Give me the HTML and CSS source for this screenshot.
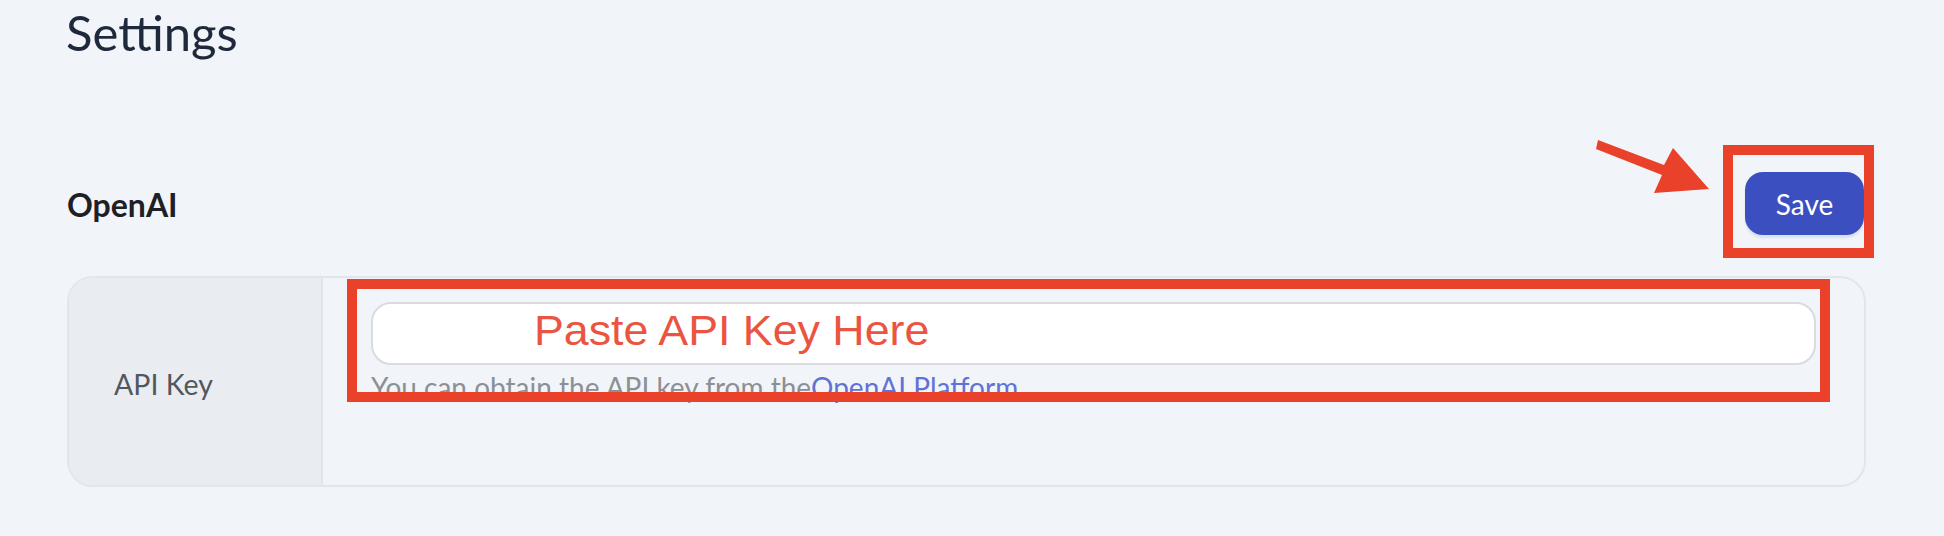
FILE: index.html
```html
<!DOCTYPE html>
<html lang="en">
<head>
<meta charset="utf-8">
<title>Settings</title>
<link rel="stylesheet" href="styles.css">
</head>
<body>
<div class="page">
  <h1 class="title">Settings</h1>
  <div class="section-head">
    <h2 class="section-title">OpenAI</h2>
    <button class="btn-save" type="button">Save</button>
  </div>
  <div class="card">
    <div class="card-label">API Key</div>
    <div class="card-body">
      <div class="key-input"><span class="annot-text">Paste API Key Here</span></div>
      <p class="hint">You can obtain the API key from the<a class="hint-link" href="#">OpenAI Platform</a></p>
    </div>
  </div>
</div>
<svg class="annotations" width="1944" height="536" viewBox="0 0 1944 536" aria-hidden="true">
  <rect x="1728" y="150" width="141" height="103" fill="none" stroke="#e9412a" stroke-width="10"/>
  <rect x="352" y="284" width="1473" height="113" fill="none" stroke="#e9412a" stroke-width="10"/>
  <polygon points="1598,140 1664,165 1673,148 1709,189 1654,193 1662,175 1596,149" fill="#e9412a"/>
</svg>
</body>
</html>
```
FILE: styles.css
```css
html, body {
  margin: 0;
  padding: 0;
}
body {
  background: #f1f5f9;
  font-family: "Lato", "Noto Sans", sans-serif;
  position: relative;
  width: 1944px;
  height: 536px;
  overflow: hidden;
}
.page {
  padding: 0 78px 0 66px;
}
.title {
  margin: 2px 0 0 0;
  font-size: 49px;
  line-height: 61px;
  font-weight: 400;
  color: #1e293b;
}
.section-head {
  margin-top: 109px;
  height: 63px;
  display: flex;
  align-items: center;
  justify-content: space-between;
}
.section-title {
  margin: 0 0 0 1px;
  font-size: 32px;
  font-weight: 700;
  color: #1f2023;
  line-height: 40px;
  padding-top: 2px;
}
.btn-save {
  height: 63px;
  width: 119px;
  margin-right: 2px;
  border: none;
  border-radius: 18px;
  background: #3c4fc1;
  color: #ffffff;
  font-family: "Lato", "Noto Sans", sans-serif;
  font-size: 28px;
  padding: 0;
  box-shadow: 0 3px 2px rgba(80, 110, 200, 0.15);
}
.card {
  margin: 41px 0 0 1px;
  border: 2px solid #e2e6ea;
  border-radius: 26px;
  display: flex;
  overflow: hidden;
}
.card-label {
  width: 254px;
  flex: none;
  background: #e9edf2;
  border-right: 2px solid #e2e6ea;
  display: flex;
  align-items: center;
  padding-left: 45px;
  box-sizing: border-box;
  font-size: 28.5px;
  color: #52575e;
  padding-top: 4px;
}
.card-body {
  flex: 1;
  padding: 24px 48px 80px 48px;
}
.key-input {
  height: 63px;
  box-sizing: border-box;
  background: #ffffff;
  border: 2px solid #d9dbde;
  border-radius: 20px;
  padding: 6px 0 0 161px;
}
.annot-text {
  display: inline-block;
  font-family: "Liberation Sans", Arial, sans-serif;
  font-size: 42px;
  line-height: 42px;
  color: #ea5441;
  transform: scaleX(1.065);
  transform-origin: left center;
}
.hint {
  margin: 4px 0 0 0;
  font-size: 28px;
  line-height: 36px;
  color: #8b9096;
}
.hint-link {
  color: #6072d6;
  text-decoration: none;
}
.annotations {
  position: absolute;
  top: 0;
  left: 0;
  pointer-events: none;
}
```
